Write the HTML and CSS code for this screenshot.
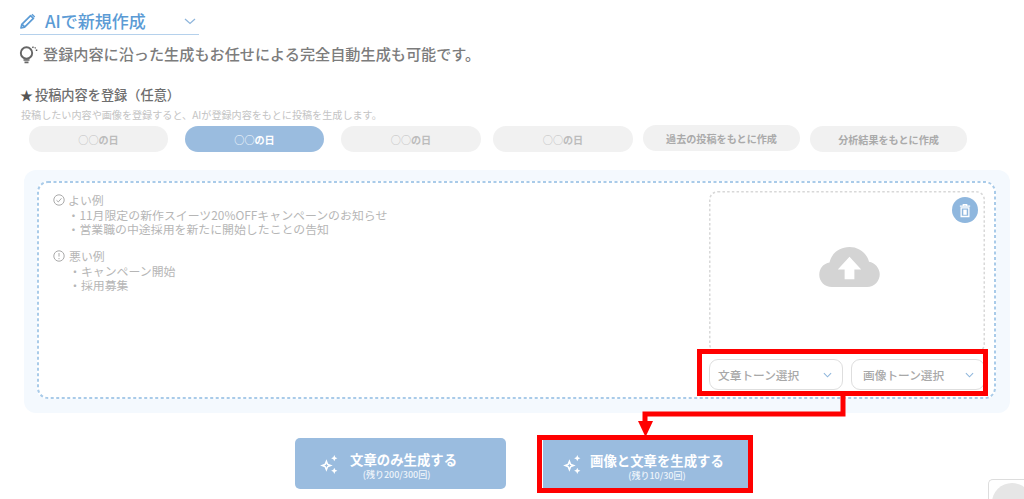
FILE: index.html
```html
<!DOCTYPE html>
<html lang="ja">
<head>
<meta charset="utf-8">
<title>AIで新規作成</title>
<link rel="stylesheet" href="styles.css">
</head>
<body>
<main class="page">
  <div class="mode">
    <svg class="mode-pencil" viewBox="0 0 16 16"><path d="M1 15l.8-3.600L10.600 2.600l2.800 2.800-8.800 8.800zM2.600 11.800l1.600 1.600" fill="none" stroke="#5b9bd5" stroke-width="1.700" stroke-linejoin="round"/><path d="M11.500 1.700l.9-.9 2.800 2.800-.9.900z" fill="#5b9bd5"/></svg>
    <span class="mode-label">AIで新規作成</span>
    <svg class="mode-chevron" viewBox="0 0 12 7"><path d="M1 1l5 4.500L11 1" fill="none" stroke="#8fb6dc" stroke-width="1.300"/></svg>
  </div>
  <p class="tip">
    <svg class="tip-icon" viewBox="0 0 19 18"><circle cx="7.500" cy="7" r="5.700" fill="none" stroke="#666" stroke-width="1.900"/><path d="M4.500 14h6M5.500 16.300h4" stroke="#666" stroke-width="1.700"/><path d="M13.500 1.800l.9-1.200M16.800 4.300h1.500M15.700 2.200l.9-.7" stroke="#555" stroke-width="1.400"/></svg>
    登録内容に沿った生成もお任せによる完全自動生成も可能です。
  </p>
  <h2 class="heading"><span class="star">★</span>投稿内容を登録（任意）</h2>
  <p class="note">投稿したい内容や画像を登録すると、AIが登録内容をもとに投稿を生成します。</p>
  <div class="pills">
    <span class="pill pill-day"><i class="rings">○○</i>の日</span>
    <span class="pill pill-day pill-on"><i class="rings">○○</i>の日</span>
    <span class="pill pill-day pill-third"><i class="rings">○○</i>の日</span>
    <span class="pill pill-day pill-fourth"><i class="rings">○○</i>の日</span>
    <span class="pill pill-past">過去の投稿をもとに作成</span>
    <span class="pill pill-analysis">分析結果をもとに作成</span>
  </div>
  <section class="panel">
    <div class="dashed">
      <svg class="dash-line" aria-hidden="true"><rect class="dash-rect-blue"/></svg>
      <div class="examples">
        <p class="ex-title"><svg class="ex-icon" viewBox="0 0 12 12"><circle cx="6" cy="6" r="5.200" fill="none" stroke="#aaa"/><path d="M3.500 6.300l1.800 1.600 3.200-3.600" fill="none" stroke="#aaa"/></svg>よい例</p>
        <p class="ex-item">・11月限定の新作スイーツ20%OFFキャンペーンのお知らせ</p>
        <p class="ex-item">・営業職の中途採用を新たに開始したことの告知</p>
        <p class="ex-title ex-gap"><svg class="ex-icon ex-icon-bad" viewBox="0 0 12 12"><circle cx="6" cy="6" r="5.200" fill="none" stroke="#aaa"/><path d="M6 3v3.600M6 8v1.200" fill="none" stroke="#aaa"/></svg>悪い例</p>
        <p class="ex-item ex-item-bad">・キャンペーン開始</p>
        <p class="ex-item ex-item-bad">・採用募集</p>
      </div>
      <div class="media">
        <div class="drop">
          <svg class="dash-line" aria-hidden="true"><rect class="dash-rect-gray"/></svg>
          <span class="trash"><svg viewBox="0 0 14 16"><path d="M1 3h12M5 3V1.200h4V3M2.500 5h9v10h-9z" fill="none" stroke="#fff" stroke-width="1.500"/><path d="M5 7h4v6H5z" fill="#fff"/></svg></span>
          <svg class="cloud" viewBox="0 0 62 41"><path d="M13 41C5.500 41 0 35.500 0 28.500 0 22 4.500 17 10.500 16 12.500 6.500 20.500 0 31 0c9.500 0 17.500 6 20 15 6 1 11 6.500 11 13 0 7-5.500 13-13 13z" fill="#d4d4d4"/><path d="M31 10L43 23h-7v10H26V23h-7z" fill="#fff"/></svg>
        </div>
        <div class="selects">
          <div class="select"><span>文章トーン選択</span><svg class="select-chevron" viewBox="0 0 10 6"><path d="M1 1l4 4 4-4" fill="none" stroke="#8fb6dc" stroke-width="1.200"/></svg></div>
          <div class="select select-image"><span>画像トーン選択</span><svg class="select-chevron" viewBox="0 0 10 6"><path d="M1 1l4 4 4-4" fill="none" stroke="#8fb6dc" stroke-width="1.200"/></svg></div>
        </div>
      </div>
    </div>
  </section>
  <div class="actions">
    <button class="gen gen-text">
      <svg class="spark" viewBox="0 0 20 20"><path d="M8 5l1.700 4.300L14 11l-4.300 1.700L8 17l-1.700-4.300L2 11l4.300-1.700zM8 9l-.6 1.400L6 11l1.400.6L8 13l.6-1.400L10 11l-1.400-.6zM15.500 1l.9 2.100 2.100.9-2.100.9-.9 2.100-.9-2.100-2.100-.9 2.100-.9zM15.500 13l.9 2.100 2.100.9-2.100.9-.9 2.100-.9-2.100-2.100-.9 2.100-.9z" fill="#fff" fill-rule="evenodd"/></svg>
      <span class="gen-copy"><b>文章のみ生成する</b><small>(残り200/300回)</small></span>
    </button>
    <button class="gen gen-both">
      <svg class="spark" viewBox="0 0 20 20"><path d="M8 5l1.700 4.300L14 11l-4.300 1.700L8 17l-1.700-4.300L2 11l4.300-1.700zM8 9l-.6 1.400L6 11l1.400.6L8 13l.6-1.400L10 11l-1.400-.6zM15.500 1l.9 2.100 2.100.9-2.100.9-.9 2.100-.9-2.100-2.100-.9 2.100-.9zM15.500 13l.9 2.100 2.100.9-2.100.9-.9 2.100-.9-2.100-2.100-.9 2.100-.9z" fill="#fff" fill-rule="evenodd"/></svg>
      <span class="gen-copy"><b>画像と文章を生成する</b><small>(残り10/30回)</small></span>
    </button>
  </div>
</main>
<div class="mark mark-selects"></div>
<div class="mark mark-button"></div>
<svg class="mark-arrow" viewBox="0 0 210 45"><path d="M205 0v18H7v10" fill="none" stroke="#f00" stroke-width="5"/><path d="M0 25h15l-7.500 16z" fill="#f00"/></svg>
<div class="widget"><span class="widget-dot"></span></div>
</body>
</html>
```
FILE: styles.css
```css
* { box-sizing: border-box; }
html, body { margin: 0; height: 499px; overflow: hidden; background: #fff; }
body { font-family: "Noto Sans CJK JP", "Noto Sans", sans-serif; position: relative; }
p, h2 { margin: 0; }
.page { height: 499px; overflow: hidden; padding: 8px 14px 0 20px; }

.mode { width: 179px; height: 27px; display: flex; align-items: center; border-bottom: 1px solid #b5d1ec; color: #5b9bd5; }
.mode-pencil { width: 16px; height: 16px; flex: none; }
.mode-label { margin-left: 9px; font-size: 17px; line-height: 24px; font-weight: 500; }
.mode-chevron { width: 12px; height: 7px; margin-left: auto; margin-right: 3px; }

.tip { display: flex; align-items: center; height: 20px; margin-top: 8px; margin-left: -1px; font-size: 15.150px; line-height: 20px; color: #7c7c7c; white-space: nowrap; font-weight: 500; }
.tip-icon { width: 19px; height: 18px; margin-right: 5px; margin-top: 4px; flex: none; }

.heading { margin-top: 23px; height: 18px; display: flex; align-items: center; font-size: 13.200px; line-height: 18px; font-weight: 500; color: #6e6e6e; white-space: nowrap; }
.star { width: 15px; font-size: 13px; color: #555; }
.note { margin-top: 4px; margin-left: 1px; font-size: 10.100px; line-height: 13px; color: #c4c4c4; white-space: nowrap; }

.pills { display: flex; margin-top: 5px; margin-left: 9px; height: 27px; align-items: flex-start; }
.pill { height: 26px; width: 139px; flex: none; border-radius: 13px; background: #f1f1f1; color: #bcbcbc; font-size: 10.100px; font-weight: 700; display: flex; align-items: center; justify-content: center; white-space: nowrap; }
.rings { font-style: normal; font-weight: 400; }
.pill-on { margin-left: 17px; background: #9abcdf; color: #fff; }
.pill-third { margin-left: 17px; width: 140px; }
.pill-fourth { margin-left: 12px; width: 140px; }
.pill-past { margin-left: 10px; width: 157px; margin-top: -1px; color: #aaa; }
.pill-analysis { margin-left: 10px; width: 157px; color: #aaa; }

.panel { margin-top: 17px; margin-left: 4px; width: 986px; height: 243px; padding: 11px 14px 14px 13px; background: #f4f9fe; border-radius: 12px; }
.dashed { position: relative; height: 218px; display: flex; justify-content: space-between; padding: 10px 11px 9px 16px; background: #fff; border-radius: 10px; }
.dash-line { position: absolute; inset: 0; width: 100%; height: 100%; pointer-events: none; }
.dash-rect-blue { x: 1px; y: 1px; width: calc(100% - 2px); height: calc(100% - 2px); rx: 10px; fill: none; stroke: #a9cbe9; stroke-width: 2px; stroke-dasharray: 3px 2.500px; }
.dash-rect-gray { x: .75px; y: .75px; width: calc(100% - 1.500px); height: calc(100% - 1.500px); rx: 8px; fill: none; stroke: #d8d8d8; stroke-width: 1.500px; stroke-dasharray: 2.500px 2.200px; }
.examples { padding-top: 2px; font-size: 11.900px; line-height: 14.500px; color: #b6b6b6; }
.ex-title { display: flex; align-items: center; }
.ex-gap { margin-top: 12.500px; }
.ex-icon { width: 12px; height: 12px; margin-right: 3px; }
.ex-icon-bad { margin-right: 4px; }
.ex-item { margin-left: 14.500px; white-space: nowrap; }
.ex-item-bad { margin-left: 16px; }

.media { width: 276px; display: flex; flex-direction: column; }
.drop { position: relative; height: 162px; flex: none; display: flex; align-items: center; justify-content: center; border-radius: 8px; padding: 0 0 10px 4px; }
.trash { position: absolute; top: 6px; right: 7px; width: 26px; height: 26px; border-radius: 50%; background: #8fb7de; display: flex; align-items: center; justify-content: center; }
.trash svg { width: 12px; height: 15px; }
.cloud { width: 61px; height: 40px; }
.selects { display: flex; gap: 8px; margin-top: 6px; }
.select { width: 134px; height: 31px; flex: none; display: flex; align-items: center; justify-content: space-between; padding: 0 8px 0 8px; background: #fff; border: 1px solid #dedede; border-radius: 9px; font-size: 11.700px; font-weight: 500; color: #a8a8a8; white-space: nowrap; }
.select-image { padding-left: 11px; }
.select-chevron { width: 9px; height: 6px; margin-right: 2px; }

.actions { display: flex; margin-top: 25px; margin-left: 275px; align-items: flex-start; }
.gen { display: flex; align-items: center; justify-content: flex-start; font-family: inherit; border: 0; color: #fff; background: #9abcdf; border-radius: 5px; padding: 0; }
.gen-text { width: 211px; height: 51px; padding-left: 23px; }
.gen-text .spark { margin-right: 11px; }
.gen-text small { margin-right: 14px; }
.gen-both { width: 205px; height: 48px; margin-left: 37px; margin-top: 2px; border-radius: 0; padding-left: 18px; }
.gen-both .spark { margin-right: 8px; }
.spark { width: 21px; height: 21px; flex: none; margin-top: 1px; }
.gen-copy { display: flex; flex-direction: column; align-items: center; padding-top: 3px; }
.gen-copy b { font-size: 13.400px; line-height: 20px; font-weight: 700; white-space: nowrap; }
.gen-copy small { font-size: 9px; line-height: 12px; font-weight: 500; white-space: nowrap; color: #eef4fa; }

.mark { position: absolute; border: 5px solid #f00; }
.mark-selects { left: 697px; top: 349px; width: 291px; height: 47px; }
.mark-button { left: 537px; top: 435px; width: 216px; height: 58px; }
.mark-arrow { position: absolute; left: 638px; top: 396px; width: 210px; height: 45px; }
.widget { position: absolute; left: 988px; top: 479px; width: 36px; height: 20px; overflow: hidden; border: 1px solid #ddd; border-right: 0; border-bottom: 0; border-radius: 5px 0 0 0; background: #fff; padding: 3px 0 0 3px; }
.widget-dot { display: block; width: 40px; height: 40px; border-radius: 50%; background: #e6e6e6; }
```
